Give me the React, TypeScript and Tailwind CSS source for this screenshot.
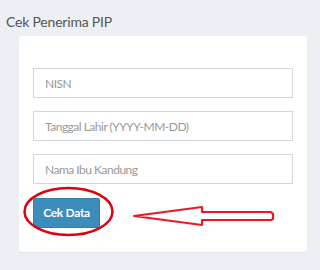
import React from 'react';

const field =
  'h-[30px] border border-[#d2d6de] px-[11px] text-[12px] tracking-[-0.5px] text-[#555] placeholder-[#999] outline-none';

export default function App() {
  return (
    <div className="relative w-[320px] h-[270px] bg-[#ecf0f5] overflow-hidden" style={{ fontFamily: 'Lato, "Open Sans", sans-serif' }}>
      <h1 className="pl-[6px] pt-[12px] h-[36px] text-[14px] tracking-[-0.2px] leading-[20px] text-[#555]">Cek Penerima PIP</h1>
      <div className="ml-[19px] w-[288px] h-[216px] bg-white rounded-[3px] shadow-[0_1px_1px_rgba(0,0,0,0.06)] px-[14px] pt-[32px]">
        <div className="flex flex-col gap-[13px]">
          <input className={field} placeholder="NISN" />
          <input className={field} placeholder="Tanggal Lahir (YYYY-MM-DD)" />
          <input className={field} placeholder="Nama Ibu Kandung" />
        </div>
        <button className="mt-[14px] h-[30px] w-[67px] bg-[#3c8dbc] border border-[#367fa9] rounded-[2px] text-white text-[12px] tracking-[-0.3px] font-bold">
          Cek Data
        </button>
      </div>
      <svg className="absolute left-0 top-0 pointer-events-none" width="320" height="270" viewBox="0 0 320 270">
        <ellipse cx="68.5" cy="211.5" rx="44" ry="23.5" fill="none" stroke="#e00010" strokeWidth="2.5" />
        <path d="M134 216 L202 207 L202 212 L271 212 L273 214 L273 219 L271 220 L202 220 L202 225 Z" fill="none" stroke="#e51a24" strokeWidth="2.2" strokeLinejoin="round" />
      </svg>
    </div>
  );
}
